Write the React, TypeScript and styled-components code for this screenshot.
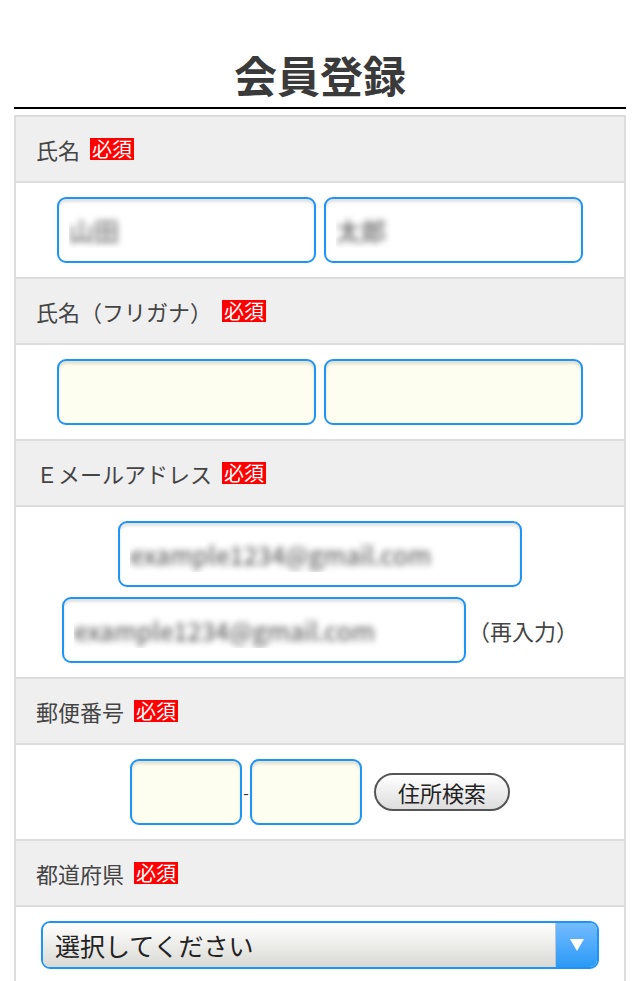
import React from "react";
import styled, { createGlobalStyle } from "styled-components";

const GlobalStyle = createGlobalStyle`
  html, body {
    margin: 0;
    padding: 0;
    background: #fff;
  }
  body {
    font-family: "Noto Sans CJK JP", "Noto Sans", sans-serif;
    color: #444;
  }
  * {
    box-sizing: border-box;
  }
`;

const Page = styled.main`
  padding: 0 14px 40px;
`;

const Title = styled.h1`
  margin: 42px 0 0;
  padding-bottom: 1px;
  border-bottom: 2px solid #000;
  text-align: center;
  font-size: 43px;
  line-height: 64px;
  font-weight: 700;
  color: #3a3a3a;
`;

const FormTable = styled.div`
  margin-top: 6px;
  border: 2px solid #ddd;
  border-bottom: none;
`;

const HeadRow = styled.div`
  display: flex;
  align-items: center;
  gap: 10px;
  height: 66px;
  padding: 0 20px;
  background: #efefef;
  border-bottom: 2px solid #ddd;
  font-size: 22px;
  line-height: 22px;
  color: #444;
`;

const Required = styled.span`
  display: inline-block;
  padding: 1px 2px;
  background: #f00;
  color: #fff;
  font-size: 20px;
  line-height: 20px;
`;

const BodyRow = styled.div`
  display: flex;
  flex-direction: column;
  align-items: center;
  gap: 10px;
  padding: 14px 0;
  border-bottom: 2px solid #ddd;
  background: #fff;
`;

const InputLine = styled.div<{ $gap?: number }>`
  display: flex;
  align-items: center;
  justify-content: center;
  gap: ${(p) => p.$gap ?? 8}px;
`;

const TextInput = styled.input<{ $w: number; $kana?: boolean; $masked?: boolean }>`
  width: ${(p) => p.$w}px;
  height: 66px;
  padding: 0 10px;
  border: 2px solid #1e94f5;
  border-radius: 9px;
  background: ${(p) => (p.$kana ? "#fdfeef" : "#fff")};
  box-shadow: inset 0 3px 3px rgba(0, 0, 0, 0.12);
  font-family: inherit;
  font-size: 25px;
  outline: none;
  color: ${(p) => (p.$masked ? "transparent" : "#333")};
  text-shadow: ${(p) => (p.$masked ? "0 0 6px rgba(70, 70, 70, 0.95)" : "none")};
`;

const Note = styled.span`
  font-size: 22px;
  line-height: 22px;
  color: #444;
`;

const Dash = styled.span`
  width: 8px;
  text-align: center;
  font-size: 16px;
  color: #333;
`;

const SearchButton = styled.button`
  height: 38px;
  margin-left: 12px;
  padding: 0 22px;
  border: 2px solid #555;
  border-radius: 19px;
  background: linear-gradient(#fff, #ddd);
  font-family: inherit;
  font-size: 22px;
  line-height: 1;
  color: #222;
`;

const SelectWrap = styled.div`
  display: flex;
  width: 558px;
  height: 48px;
  border: 2px solid #1e94f5;
  border-radius: 9px;
  overflow: hidden;
`;

const Select = styled.select`
  flex: 1;
  appearance: none;
  border: none;
  padding: 0 12px;
  background: linear-gradient(#fff, #d9d9d4);
  font-family: inherit;
  font-size: 25px;
  color: #222;
  outline: none;
  border-right: 1px solid #b9c5cf;
`;

const Arrow = styled.div`
  display: flex;
  align-items: center;
  justify-content: center;
  width: 41px;
  background: linear-gradient(#74bbff, #2a9af5);
`;

function Label({ children }: { children: React.ReactNode }) {
  return (
    <HeadRow>
      <span>{children}</span>
      <Required>必須</Required>
    </HeadRow>
  );
}

export default function App() {
  return (
    <>
      <GlobalStyle />
      <Page>
        <Title>会員登録</Title>
        <FormTable>
          <Label>氏名</Label>
          <BodyRow>
            <InputLine>
              <TextInput $w={259} $masked defaultValue="山田" />
              <TextInput $w={259} $masked defaultValue="太郎" />
            </InputLine>
          </BodyRow>

          <Label>氏名（フリガナ）</Label>
          <BodyRow>
            <InputLine>
              <TextInput $w={259} $kana />
              <TextInput $w={259} $kana />
            </InputLine>
          </BodyRow>

          <Label>Ｅメールアドレス</Label>
          <BodyRow>
            <TextInput $w={404} $masked defaultValue="example1234@gmail.com" />
            <InputLine $gap={2}>
              <TextInput $w={404} $masked defaultValue="example1234@gmail.com" />
              <Note>（再入力）</Note>
            </InputLine>
          </BodyRow>

          <Label>郵便番号</Label>
          <BodyRow>
            <InputLine $gap={0}>
              <TextInput $w={112} $kana />
              <Dash>-</Dash>
              <TextInput $w={112} $kana />
              <SearchButton type="button">住所検索</SearchButton>
            </InputLine>
          </BodyRow>

          <Label>都道府県</Label>
          <BodyRow>
            <SelectWrap>
              <Select defaultValue="">
                <option value="">選択してください</option>
                <option value="13">東京都</option>
              </Select>
              <Arrow>
                <svg width="14" height="12" viewBox="0 0 14 12">
                  <path d="M0 0 H14 L7 12 Z" fill="#fff" />
                </svg>
              </Arrow>
            </SelectWrap>
          </BodyRow>
        </FormTable>
      </Page>
    </>
  );
}
